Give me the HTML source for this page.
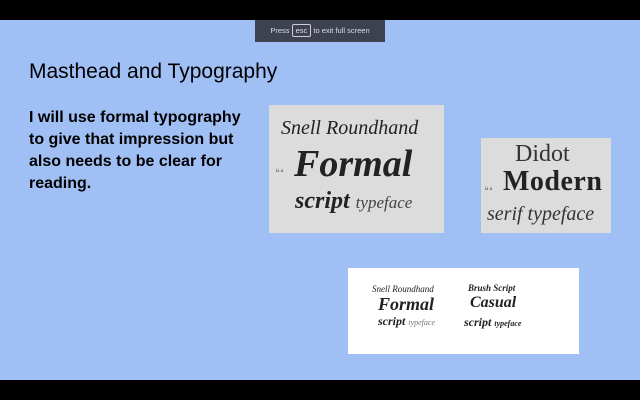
<html><head><style>
body{margin:0;width:640px;height:400px;background:#a0bff5;position:relative;overflow:hidden;font-family:"Liberation Sans",sans-serif}
.a{position:absolute}
.s{font-family:"Liberation Serif",serif;font-style:italic;color:#222;white-space:nowrap}
</style></head><body>
<div class="a" style="left:0;top:0;width:640px;height:20px;background:#000"></div>
<div class="a" style="left:0;top:380px;width:640px;height:20px;background:#000"></div>
<div class="a" style="left:255px;top:20px;width:130px;height:22px;background:#3d424e;color:#dde;font-size:7.5px;line-height:22px;text-align:center">Press <span style="border:1px solid #ccd;border-radius:2px;padding:1px 3px">esc</span> to exit full screen</div>
<div class="a" style="left:29px;top:60px;font-size:21px;color:#000">Masthead and Typography</div>
<div class="a" style="left:29px;top:107px;font-size:16px;font-weight:bold;line-height:22px;color:#000">I will use formal typography<br>to give that impression but<br>also needs to be clear for<br>reading.</div>
<div class="a" style="left:269px;top:105px;width:175px;height:128px;background:#dcdcdc">
<div class="a s" style="left:12px;top:12px;font-size:20px">Snell Roundhand</div>
<div class="a s" style="left:7px;top:64px;font-size:5px">is a</div>
<div class="a s" style="left:25px;top:37px;font-size:38px;font-weight:bold">Formal</div>
<div class="a s" style="left:26px;top:83px;font-size:24px;font-weight:bold">script <span style="font-weight:normal;font-size:17px;color:#444">typeface</span></div>
</div>
<div class="a" style="left:481px;top:138px;width:130px;height:95px;background:#dcdcdc">
<div class="a" style="left:34px;top:3px;font-family:'Liberation Serif',serif;font-size:24px;color:#333">Didot</div>
<div class="a s" style="left:4px;top:49px;font-size:5px">is a</div>
<div class="a" style="left:22px;top:28px;font-family:'Liberation Serif',serif;font-size:28px;font-weight:bold;color:#222;letter-spacing:0.5px">Modern</div>
<div class="a s" style="left:6px;top:65px;font-size:20px;color:#333">serif typeface</div>
</div>
<div class="a" style="left:348px;top:268px;width:231px;height:86px;background:#fff">
<div class="a s" style="left:24px;top:16px;font-size:9px">Snell Roundhand</div>
<div class="a s" style="left:30px;top:26px;font-size:18px;font-weight:bold">Formal</div>
<div class="a s" style="left:30px;top:46px;font-size:12px;font-weight:bold">script <span style="font-size:8px;font-weight:normal;color:#777">typeface</span></div>
<div class="a s" style="left:120px;top:15px;font-size:9px;font-weight:bold">Brush Script</div>
<div class="a s" style="left:122px;top:26px;font-size:16px;font-weight:bold">Casual</div>
<div class="a s" style="left:116px;top:47px;font-size:12px;font-weight:bold">script <span style="font-size:8px">typeface</span></div>
</div>
</body></html>
